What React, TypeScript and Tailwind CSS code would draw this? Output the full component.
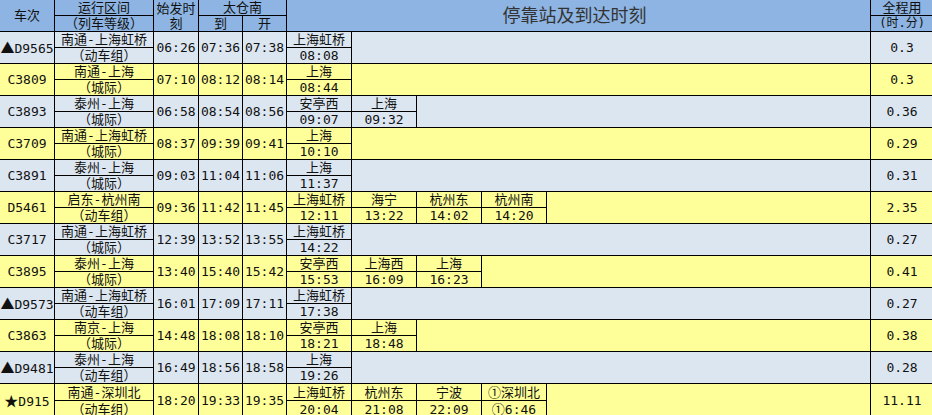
import { Fragment } from "react"

type Row = {
    mark?: string
    no: string
    route: string
    kind: string
    start: string
    arr: string
    dep: string
    stops: [string, string][]
    total: string
    yellow: boolean
}

const rows: Row[] = [
    { mark: "▲", no: "D9565", route: "南通-上海虹桥", kind: "（动车组）", start: "06:26", arr: "07:36", dep: "07:38", stops: [["上海虹桥", "08:08"]], total: "0.3", yellow: false },
    { no: "C3809", route: "南通-上海", kind: "（城际）", start: "07:10", arr: "08:12", dep: "08:14", stops: [["上海", "08:44"]], total: "0.3", yellow: true },
    { no: "C3893", route: "泰州-上海", kind: "（城际）", start: "06:58", arr: "08:54", dep: "08:56", stops: [["安亭西", "09:07"], ["上海", "09:32"]], total: "0.36", yellow: false },
    { no: "C3709", route: "南通-上海虹桥", kind: "（城际）", start: "08:37", arr: "09:39", dep: "09:41", stops: [["上海", "10:10"]], total: "0.29", yellow: true },
    { no: "C3891", route: "泰州-上海", kind: "（城际）", start: "09:03", arr: "11:04", dep: "11:06", stops: [["上海", "11:37"]], total: "0.31", yellow: false },
    { no: "D5461", route: "启东-杭州南", kind: "（动车组）", start: "09:36", arr: "11:42", dep: "11:45", stops: [["上海虹桥", "12:11"], ["海宁", "13:22"], ["杭州东", "14:02"], ["杭州南", "14:20"]], total: "2.35", yellow: true },
    { no: "C3717", route: "南通-上海虹桥", kind: "（城际）", start: "12:39", arr: "13:52", dep: "13:55", stops: [["上海虹桥", "14:22"]], total: "0.27", yellow: false },
    { no: "C3895", route: "泰州-上海", kind: "（城际）", start: "13:40", arr: "15:40", dep: "15:42", stops: [["安亭西", "15:53"], ["上海西", "16:09"], ["上海", "16:23"]], total: "0.41", yellow: true },
    { mark: "▲", no: "D9573", route: "南通-上海虹桥", kind: "（动车组）", start: "16:01", arr: "17:09", dep: "17:11", stops: [["上海虹桥", "17:38"]], total: "0.27", yellow: false },
    { no: "C3863", route: "南京-上海", kind: "（城际）", start: "14:48", arr: "18:08", dep: "18:10", stops: [["安亭西", "18:21"], ["上海", "18:48"]], total: "0.38", yellow: true },
    { mark: "▲", no: "D9481", route: "泰州-上海", kind: "（动车组）", start: "16:49", arr: "18:56", dep: "18:58", stops: [["上海", "19:26"]], total: "0.28", yellow: false },
    { mark: "★", no: "D915", route: "南通-深圳北", kind: "（动车组）", start: "18:20", arr: "19:33", dep: "19:35", stops: [["上海虹桥", "20:04"], ["杭州东", "21:08"], ["宁波", "22:09"], ["①深圳北", "①6:46"]], total: "11.11", yellow: true },
]

const cell = "border border-black p-0 text-center align-middle whitespace-nowrap overflow-hidden"
const cjk = "[font-family:'Noto_Sans_CJK_SC',sans-serif]"

// circled digit needs the CJK font, the rest stays mono
const withCircle = (t: string) =>
    t.startsWith("①") ? (
        <>
            <span className={cjk}>①</span>
            {t.slice(1)}
        </>
    ) : (
        t
    )

const App = () => {
    return (
        <div className="w-[932px] h-[415px] overflow-hidden bg-white">
            <table className="-ml-px -mt-px w-[934px] table-fixed border-collapse text-[13px] leading-[15px] text-[#111] [font-family:'DejaVu_Sans_Mono','Noto_Sans_CJK_SC',monospace]">
                <colgroup>
                    <col className="w-[55px]" />
                    <col className="w-[99px]" />
                    <col className="w-[45px]" />
                    <col className="w-[44px]" />
                    <col className="w-[44px]" />
                    <col className="w-[65px]" />
                    <col className="w-[65px]" />
                    <col className="w-[65px]" />
                    <col className="w-[65px]" />
                    <col className="w-[324px]" />
                    <col className="w-[63px]" />
                </colgroup>
                <tbody>
                    {/* header */}
                    <tr className="h-4 bg-[#8db4e2]">
                        <td rowSpan={2} className={cell}>车次</td>
                        <td className={cell}>运行区间</td>
                        <td rowSpan={2} className="border border-black p-0 text-center align-middle leading-[15px]">始发时刻</td>
                        <td colSpan={2} className={cell}>太仓南</td>
                        <td rowSpan={2} colSpan={5} className={`${cell} text-[18px] leading-[20px] pr-2 text-[#333]`}>停靠站及到达时刻</td>
                        <td className={cell}>全程用</td>
                    </tr>
                    <tr className="h-4 bg-[#8db4e2]">
                        <td className={cell}>（列车等级）</td>
                        <td className={cell}>到</td>
                        <td className={cell}>开</td>
                        <td className={`${cell} text-[12px]`}>(时.分)</td>
                    </tr>

                    {rows.map((r) => {
                        const bg = r.yellow ? "bg-[#ffff99]" : "bg-[#dce6f1]"
                        return (
                            <Fragment key={r.no}>
                                <tr className={`h-4 ${bg}`}>
                                    <td rowSpan={2} className={cell}>
                                        {r.mark && <span className={`${cjk} text-[14px]`}>{r.mark}</span>}
                                        {r.no}
                                    </td>
                                    <td className={cell}>{r.route}</td>
                                    <td rowSpan={2} className={cell}>{r.start}</td>
                                    <td rowSpan={2} className={cell}>{r.arr}</td>
                                    <td rowSpan={2} className={cell}>{r.dep}</td>
                                    {r.stops.map((s) => (
                                        <td key={s[0]} className={cell}>{withCircle(s[0])}</td>
                                    ))}
                                    <td rowSpan={2} colSpan={5 - r.stops.length} className={cell}></td>
                                    <td rowSpan={2} className={cell}>{r.total}</td>
                                </tr>
                                <tr className={`h-4 ${bg}`}>
                                    <td className={cell}>{r.kind}</td>
                                    {r.stops.map((s) => (
                                        <td key={s[0]} className={cell}>{withCircle(s[1])}</td>
                                    ))}
                                </tr>
                            </Fragment>
                        )
                    })}
                </tbody>
            </table>
        </div>
    )
}

export default App
